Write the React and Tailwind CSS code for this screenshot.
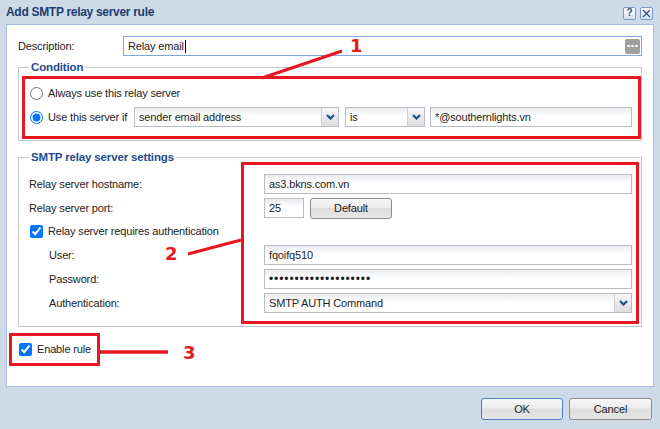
import React from "react";

const inputBg = "bg-[linear-gradient(to_bottom,#e9ebef,#ffffff_45%)]";

function Chevron() {
  return (
    <svg width="9" height="6" viewBox="0 0 9 6">
      <path d="M1 1 L4.5 4.5 L8 1" fill="none" stroke="#1c4d8c" strokeWidth="2.2" />
    </svg>
  );
}

function Box({ className = "", children }) {
  return (
    <div
      className={`h-[20px] border border-[#b9bcc5] ${inputBg} flex items-center text-[11px] text-[#1c1c1c] ${className}`}
    >
      {children}
    </div>
  );
}

function Select({ className = "", value }) {
  return (
    <Box className={className}>
      <span className="flex-1 pl-[4px] truncate">{value}</span>
      <div className="h-full w-[17px] border-l border-[#cfd1d6] bg-[linear-gradient(to_bottom,#f7f7f7,#dcdcdc)] flex items-center justify-center">
        <Chevron />
      </div>
    </Box>
  );
}

function Btn({ children, className = "" }) {
  return (
    <button
      className={`rounded-[3px] border bg-[linear-gradient(to_bottom,#f7f7f7_0%,#ececec_45%,#dedede_50%,#e6e6e6_100%)] text-[11px] text-[#1c1c1c] flex items-center justify-center ${className}`}
    >
      {children}
    </button>
  );
}

export default function App() {
  return (
    <div className="relative w-[660px] h-[429px] bg-[#cfdae8] overflow-hidden font-[family-name:'Liberation_Sans',Arial,sans-serif] tracking-[-0.15px] text-[#222]">
      {/* Title bar */}
      <div className="h-[24px] flex items-center justify-between pl-[6px] pr-[7px]">
        <span className="text-[12px] font-bold text-[#1c3d72] tracking-[-0.3px]">Add SMTP relay server rule</span>
        <div className="flex gap-[4px] mt-[2px]">
          <div className="w-[13px] h-[13px] rounded-[2px] border border-[#7b98c4] bg-[linear-gradient(to_bottom,#ffffff,#d6e1f0)] flex items-center justify-center text-[10px] font-bold text-[#2a4c86] leading-none">
            ?
          </div>
          <div className="w-[13px] h-[13px] rounded-[2px] border border-[#7b98c4] bg-[linear-gradient(to_bottom,#ffffff,#d6e1f0)] flex items-center justify-center">
            <svg width="9" height="9" viewBox="0 0 9 9">
              <path d="M1 1 L8 8 M8 1 L1 8" stroke="#2a4c86" strokeWidth="1.2" />
            </svg>
          </div>
        </div>
      </div>

      {/* White panel */}
      <div className="ml-[6px] w-[648px] h-[363px] border border-[#a7bfe3] bg-white px-[11px] pt-[11px]">
        {/* Description */}
        <div className="flex items-center h-[20px]">
          <span className="w-[105px] text-[11px]">Description:</span>
          <div className="flex-1 h-[20px] border border-[#7ea6d8] bg-white flex items-center pl-[4px] pr-[1px] text-[11px] text-[#1c1c1c]">
            <span>Relay email</span>
            <span className="w-[1px] h-[13px] bg-black ml-[1px]" />
            <span className="flex-1" />
            <div className="w-[15px] h-[15px] rounded-[2px] bg-[#9f9f9f] flex items-center justify-center gap-[1.5px]">
              <span className="w-[2.5px] h-[2.5px] rounded-full bg-white" />
              <span className="w-[2.5px] h-[2.5px] rounded-full bg-white" />
              <span className="w-[2.5px] h-[2.5px] rounded-full bg-white" />
            </div>
          </div>
        </div>

        {/* Condition */}
        <div className="relative mt-[11px] border border-[#c4c8d1] pl-[3px] pt-[8px] pb-[1px]">
          <span className="absolute left-[10px] top-[-8px] h-[14px] leading-[14px] px-[2px] bg-white text-[11.5px] font-bold text-[#1d4a8e]">
            Condition
          </span>
          <div className="border-[3px] border-[#e8161f] pl-[5px] pr-[6px] pt-[4px] pb-[9px] flex flex-col gap-[4px]">
            <label className="h-[20px] flex items-center gap-[5px] text-[11px]">
              <input type="radio" name="cond" className="w-[13px] h-[13px]" />
              <span>Always use this relay server</span>
            </label>
            <div className="h-[20px] flex items-center">
              <label className="w-[104px] flex items-center gap-[5px] text-[11px]">
                <input type="radio" name="cond" defaultChecked className="w-[13px] h-[13px]" />
                <span>Use this server if</span>
              </label>
              <Select className="w-[205px]" value="sender email address" />
              <Select className="w-[80px] ml-[6px]" value="is" />
              <Box className="flex-1 ml-[5px] pl-[4px]">*@southernlights.vn</Box>
            </div>
          </div>
        </div>

        {/* SMTP relay server settings */}
        <div className="relative mt-[16px] border border-[#c4c8d1] pl-[10px] pr-[9px] pt-[16px] pb-[13px]">
          <span className="absolute left-[10px] top-[-8px] h-[14px] leading-[14px] px-[2px] bg-white text-[11.5px] font-bold text-[#1d4a8e]">
            SMTP relay server settings
          </span>
          <div className="flex flex-col gap-[4px] text-[11px]">
            <div className="h-[20px] flex items-center">
              <span className="w-[235px]">Relay server hostname:</span>
              <Box className="flex-1 pl-[4px]">as3.bkns.com.vn</Box>
            </div>
            <div className="h-[20px] flex items-center">
              <span className="w-[235px]">Relay server port:</span>
              <Box className="w-[40px] pl-[4px]">25</Box>
              <Btn className="ml-[6px] w-[82px] h-[21px] border-[#8c8c8c]">Default</Btn>
            </div>
            <label className="h-[19px] flex items-center gap-[5px]">
              <input type="checkbox" defaultChecked className="w-[13px] h-[13px] ml-[1px]" />
              <span>Relay server requires authentication</span>
            </label>
            <div className="h-[20px] flex items-center">
              <span className="w-[235px] pl-[20px]">User:</span>
              <Box className="flex-1 pl-[4px]">fqoifq510</Box>
            </div>
            <div className="h-[20px] flex items-center">
              <span className="w-[235px] pl-[20px]">Password:</span>
              <Box className="flex-1 pl-[4px]">
                <span className="text-[12px] tracking-[0.9px]">••••••••••••••••••••</span>
              </Box>
            </div>
            <div className="h-[20px] flex items-center">
              <span className="w-[235px] pl-[20px]">Authentication:</span>
              <Select className="flex-1" value="SMTP AUTH Command" />
            </div>
          </div>
        </div>

        {/* Enable rule */}
        <div className="mt-[6px] ml-[-9px] w-[91px] h-[33px] border-[3px] border-[#e8161f] flex items-center pl-[7px] gap-[5px] text-[11px]">
          <input type="checkbox" defaultChecked className="w-[13px] h-[13px]" />
          <span>Enable rule</span>
        </div>
      </div>

      {/* Footer */}
      <div className="flex justify-end gap-[6px] pr-[8px] pt-[11px]">
        <Btn className="w-[82px] h-[22px] border-[#4c80c2]">OK</Btn>
        <Btn className="w-[83px] h-[22px] border-[#8c8c8c]">Cancel</Btn>
      </div>

      {/* Annotations */}
      <div className="absolute left-[241px] top-[162px] w-[398px] h-[162px] border-[3px] border-[#e8161f] pointer-events-none" />
      <svg className="absolute left-0 top-0 pointer-events-none" width="660" height="429" viewBox="0 0 660 429">
        <path d="M262 78 L342 51" stroke="#e8161f" strokeWidth="3" />
        <path d="M188 254 L241 240" stroke="#e8161f" strokeWidth="3" />
        <path d="M100 352 L168 352" stroke="#e8161f" strokeWidth="3.5" />
      </svg>
      <span className="absolute left-[350px] top-[37px] text-[18px] leading-none font-bold text-[#e8161f] font-[family-name:'DejaVu_Sans',sans-serif]">1</span>
      <span className="absolute left-[165px] top-[245px] text-[18px] leading-none font-bold text-[#e8161f] font-[family-name:'DejaVu_Sans',sans-serif]">2</span>
      <span className="absolute left-[183px] top-[344px] text-[18px] leading-none font-bold text-[#e8161f] font-[family-name:'DejaVu_Sans',sans-serif]">3</span>
    </div>
  );
}
